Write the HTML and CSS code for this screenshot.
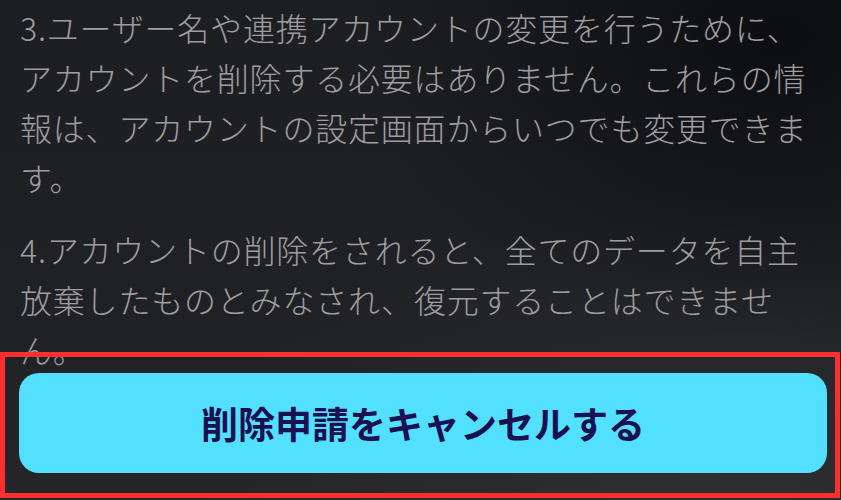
FILE: index.html
```html
<!DOCTYPE html>
<html lang="ja">
<head>
<meta charset="utf-8">
<link rel="stylesheet" href="styles.css">
</head>
<body>
<div class="page">
  <div class="content">
    <p class="para">3.ユーザー名や連携アカウントの変更を行うために、アカウントを削除する必要はありません。これらの情報は、アカウントの設定画面からいつでも変更できます。</p>
    <p class="para">4.アカウントの削除をされると、全てのデータを自主放棄したものとみなされ、復元することはできません。</p>
  </div>
  <div class="footer">
    <button class="cancel-btn">削除申請をキャンセルする</button>
  </div>
  <div class="highlight"></div>
</div>
</body>
</html>
```

FILE: styles.css
```css
html, body {
  margin: 0;
  padding: 0;
}
body {
  width: 841px;
  height: 500px;
  overflow: hidden;
  font-family: "Noto Sans CJK JP", "Noto Sans", sans-serif;
}
.page {
  position: relative;
  width: 841px;
  height: 500px;
  display: flex;
  flex-direction: column;
  background:
    radial-gradient(ellipse 420px 300px at 780px 40px, rgba(8,9,12,0.75), rgba(8,9,12,0) 100%),
    radial-gradient(ellipse 500px 260px at 700px 470px, rgba(60,62,66,0.35), rgba(60,62,66,0) 100%),
    linear-gradient(180deg, #1d1e21 0%, #202124 60%, #25262a 100%);
}
.content {
  height: 370px;
  overflow: hidden;
  padding: 2px 26px 0 20px;
  box-sizing: border-box;
}
.para {
  margin: 0 0 22px 0;
  font-size: 32px;
  font-weight: 300;
  line-height: 50px;
  letter-spacing: 0.8px;
  color: #9e9ea0;
}
.footer {
  padding: 3px 14px 27px 19px;
  display: flex;
}
.cancel-btn {
  flex: 1;
  height: 100px;
  border: none;
  border-radius: 20px;
  background: #53e0fe;
  color: #1b1050;
  font-family: "Noto Sans CJK JP", "Noto Sans", sans-serif;
  font-weight: 700;
  font-size: 37px;
  padding: 0;
}
.highlight {
  position: absolute;
  left: 0;
  top: 352px;
  width: 840px;
  height: 146px;
  box-sizing: border-box;
  border: 5px solid #fb2e30;
}
```
